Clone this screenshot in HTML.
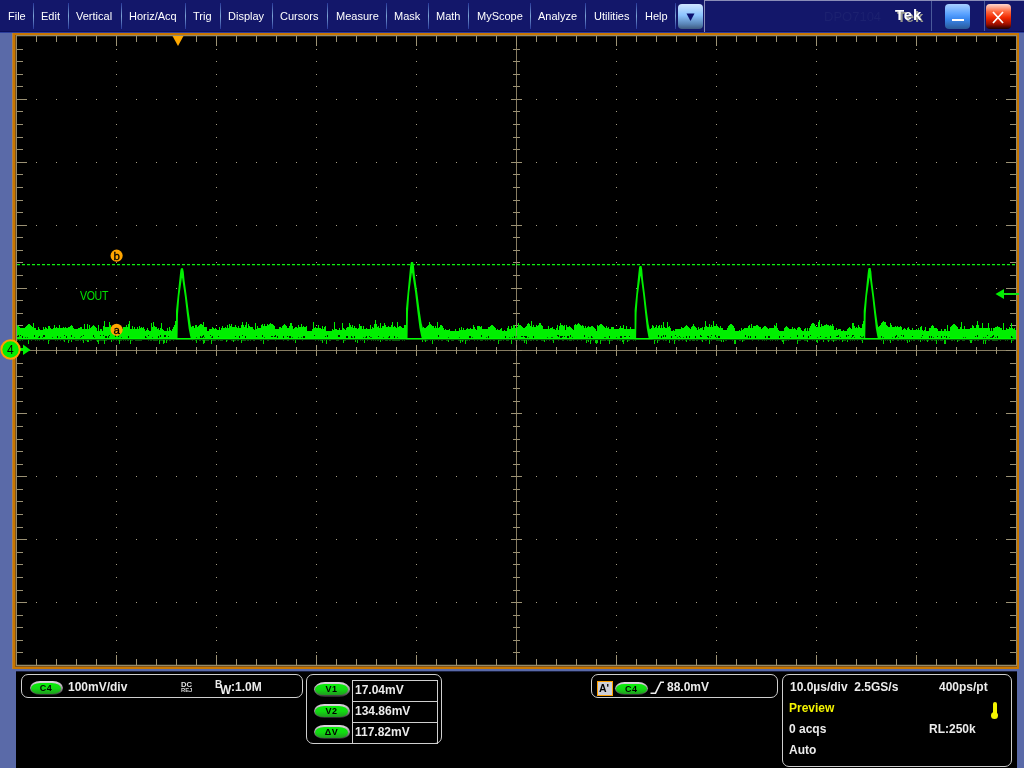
<!DOCTYPE html>
<html><head><meta charset="utf-8"><title>Tek</title>
<style>
html,body{margin:0;padding:0;width:1024px;height:768px;overflow:hidden;background:#5a6aa8;}
body{-webkit-font-smoothing:antialiased;}
.t{will-change:transform;}
.t{position:absolute;white-space:nowrap;font-family:"Liberation Sans",sans-serif;line-height:1;}
.m{color:#fff;font-size:11px;top:11px;}
.sep{position:absolute;top:3px;width:1px;height:26px;background:linear-gradient(#28389a,#7ca4d4 50%,#28389a);}
.w{color:#ececec;font-size:12px;font-weight:bold;}
.panel{position:absolute;border:1.5px solid #cfcfcf;border-radius:7px;box-sizing:border-box;}
.pill{position:absolute;border-radius:11px/7.5px;box-sizing:border-box;background:linear-gradient(#e4dce4,#a8a0a8 45%,#505050 85%,#202020);}
.pill>div{position:absolute;left:1.2px;right:1.2px;top:2px;bottom:1.2px;border-radius:10px/6px;background:linear-gradient(#08f008,#12d812 50%,#209a20);color:#000;font-family:"Liberation Sans",sans-serif;font-size:9px;font-weight:bold;text-align:center;letter-spacing:0.6px;will-change:transform;}
</style></head><body>

<div style="position:absolute;left:0;top:0;width:1024px;height:32px;background:#13176a;"></div>
<div style="position:absolute;left:0;top:31px;width:1024px;height:1px;background:#0b0f5a;"></div>
<div style="position:absolute;left:0;top:32px;width:1024px;height:1px;background:#2c3e9c;"></div>
<div style="position:absolute;left:704px;top:0;width:320px;height:1px;background:#8a8db8;"></div>
<div style="position:absolute;left:704px;top:0;width:1px;height:32px;background:#8a8db8;"></div>
<div class="t m" style="left:7.8px;">File</div>
<div class="t m" style="left:40.7px;">Edit</div>
<div class="t m" style="left:76.2px;">Vertical</div>
<div class="t m" style="left:128.6px;">Horiz/Acq</div>
<div class="t m" style="left:193.1px;">Trig</div>
<div class="t m" style="left:227.6px;">Display</div>
<div class="t m" style="left:279.8px;">Cursors</div>
<div class="t m" style="left:335.5px;">Measure</div>
<div class="t m" style="left:393.8px;">Mask</div>
<div class="t m" style="left:435.8px;">Math</div>
<div class="t m" style="left:476.7px;">MyScope</div>
<div class="t m" style="left:538.3px;">Analyze</div>
<div class="t m" style="left:593.7px;">Utilities</div>
<div class="t m" style="left:644.7px;">Help</div>
<div class="sep" style="left:33px;"></div>
<div class="sep" style="left:68px;"></div>
<div class="sep" style="left:121px;"></div>
<div class="sep" style="left:185px;"></div>
<div class="sep" style="left:220px;"></div>
<div class="sep" style="left:272px;"></div>
<div class="sep" style="left:327px;"></div>
<div class="sep" style="left:386px;"></div>
<div class="sep" style="left:428px;"></div>
<div class="sep" style="left:468px;"></div>
<div class="sep" style="left:530px;"></div>
<div class="sep" style="left:585px;"></div>
<div class="sep" style="left:636px;"></div>
<div class="sep" style="left:675px;"></div>
<div style="position:absolute;left:931px;top:1px;width:1px;height:30px;background:#4a5a9a;"></div>
<div style="position:absolute;left:984px;top:1px;width:1px;height:30px;background:#4a5a9a;"></div>
<div style="position:absolute;left:678px;top:4px;width:25px;height:25px;border-radius:4px;background:linear-gradient(#cfe6ff,#8cc4ff 45%,#5a86b8 80%,#3e5a80);"></div>
<svg style="position:absolute;left:0;top:0" width="1024" height="40"><polygon points="686.5,13.5 694.5,13.5 690.5,21" fill="#0b1070"/></svg>
<div class="t" style="left:824px;top:10px;font-size:13px;color:#1c2170;">DPO7104</div>
<div class="t" style="left:896.5px;top:8.5px;font-size:15px;font-weight:bold;letter-spacing:0.8px;color:#9c9c90;">Tek</div>
<div class="t" style="left:894.5px;top:6.5px;font-size:15px;font-weight:bold;letter-spacing:0.8px;color:#fff;">Tek</div>
<div style="position:absolute;left:945px;top:4px;width:25px;height:25px;border-radius:4px;background:linear-gradient(#a8d0ff,#5aa2ff 40%,#3a88f0 60%,#2a5a98);"></div>
<div style="position:absolute;left:952px;top:19px;width:12px;height:2px;background:#fff;"></div>
<div style="position:absolute;left:986px;top:4px;width:25px;height:25px;border-radius:4px;background:linear-gradient(#ffd8d0,#ff6a40 30%,#f02800 55%,#a01000 80%,#200000);"></div>
<svg style="position:absolute;left:0;top:0" width="1024" height="40"><path d="M993 12 L1003 23 M1003 12 L993 23" stroke="#fff" stroke-width="1.7"/></svg>
<svg style="position:absolute;left:0;top:0" width="1024" height="768" shape-rendering="crispEdges"><rect x="12" y="33" width="1007" height="636" fill="#c87600"/><rect x="12" y="33" width="1" height="636" fill="#b08048"/><rect x="15" y="35" width="1002" height="632" fill="#80541a"/><rect x="16" y="35" width="1001" height="631" fill="#958a6a"/><rect x="17" y="36" width="999" height="629" fill="#262418"/><rect x="17" y="37" width="999" height="627" fill="#000"/><path d="M116 49 h1 v1 h-1zM116 61 h1 v1 h-1zM116 74 h1 v1 h-1zM116 86 h1 v1 h-1zM116 99 h1 v1 h-1zM116 111 h1 v1 h-1zM116 124 h1 v1 h-1zM116 137 h1 v1 h-1zM116 149 h1 v1 h-1zM116 162 h1 v1 h-1zM116 174 h1 v1 h-1zM116 187 h1 v1 h-1zM116 200 h1 v1 h-1zM116 212 h1 v1 h-1zM116 225 h1 v1 h-1zM116 237 h1 v1 h-1zM116 250 h1 v1 h-1zM116 262 h1 v1 h-1zM116 275 h1 v1 h-1zM116 288 h1 v1 h-1zM116 300 h1 v1 h-1zM116 313 h1 v1 h-1zM116 325 h1 v1 h-1zM116 338 h1 v1 h-1zM116 350 h1 v1 h-1zM116 363 h1 v1 h-1zM116 376 h1 v1 h-1zM116 388 h1 v1 h-1zM116 401 h1 v1 h-1zM116 413 h1 v1 h-1zM116 426 h1 v1 h-1zM116 439 h1 v1 h-1zM116 451 h1 v1 h-1zM116 464 h1 v1 h-1zM116 476 h1 v1 h-1zM116 489 h1 v1 h-1zM116 501 h1 v1 h-1zM116 514 h1 v1 h-1zM116 527 h1 v1 h-1zM116 539 h1 v1 h-1zM116 552 h1 v1 h-1zM116 564 h1 v1 h-1zM116 577 h1 v1 h-1zM116 590 h1 v1 h-1zM116 602 h1 v1 h-1zM116 615 h1 v1 h-1zM116 627 h1 v1 h-1zM116 640 h1 v1 h-1zM116 652 h1 v1 h-1zM216 49 h1 v1 h-1zM216 61 h1 v1 h-1zM216 74 h1 v1 h-1zM216 86 h1 v1 h-1zM216 99 h1 v1 h-1zM216 111 h1 v1 h-1zM216 124 h1 v1 h-1zM216 137 h1 v1 h-1zM216 149 h1 v1 h-1zM216 162 h1 v1 h-1zM216 174 h1 v1 h-1zM216 187 h1 v1 h-1zM216 200 h1 v1 h-1zM216 212 h1 v1 h-1zM216 225 h1 v1 h-1zM216 237 h1 v1 h-1zM216 250 h1 v1 h-1zM216 262 h1 v1 h-1zM216 275 h1 v1 h-1zM216 288 h1 v1 h-1zM216 300 h1 v1 h-1zM216 313 h1 v1 h-1zM216 325 h1 v1 h-1zM216 338 h1 v1 h-1zM216 350 h1 v1 h-1zM216 363 h1 v1 h-1zM216 376 h1 v1 h-1zM216 388 h1 v1 h-1zM216 401 h1 v1 h-1zM216 413 h1 v1 h-1zM216 426 h1 v1 h-1zM216 439 h1 v1 h-1zM216 451 h1 v1 h-1zM216 464 h1 v1 h-1zM216 476 h1 v1 h-1zM216 489 h1 v1 h-1zM216 501 h1 v1 h-1zM216 514 h1 v1 h-1zM216 527 h1 v1 h-1zM216 539 h1 v1 h-1zM216 552 h1 v1 h-1zM216 564 h1 v1 h-1zM216 577 h1 v1 h-1zM216 590 h1 v1 h-1zM216 602 h1 v1 h-1zM216 615 h1 v1 h-1zM216 627 h1 v1 h-1zM216 640 h1 v1 h-1zM216 652 h1 v1 h-1zM316 49 h1 v1 h-1zM316 61 h1 v1 h-1zM316 74 h1 v1 h-1zM316 86 h1 v1 h-1zM316 99 h1 v1 h-1zM316 111 h1 v1 h-1zM316 124 h1 v1 h-1zM316 137 h1 v1 h-1zM316 149 h1 v1 h-1zM316 162 h1 v1 h-1zM316 174 h1 v1 h-1zM316 187 h1 v1 h-1zM316 200 h1 v1 h-1zM316 212 h1 v1 h-1zM316 225 h1 v1 h-1zM316 237 h1 v1 h-1zM316 250 h1 v1 h-1zM316 262 h1 v1 h-1zM316 275 h1 v1 h-1zM316 288 h1 v1 h-1zM316 300 h1 v1 h-1zM316 313 h1 v1 h-1zM316 325 h1 v1 h-1zM316 338 h1 v1 h-1zM316 350 h1 v1 h-1zM316 363 h1 v1 h-1zM316 376 h1 v1 h-1zM316 388 h1 v1 h-1zM316 401 h1 v1 h-1zM316 413 h1 v1 h-1zM316 426 h1 v1 h-1zM316 439 h1 v1 h-1zM316 451 h1 v1 h-1zM316 464 h1 v1 h-1zM316 476 h1 v1 h-1zM316 489 h1 v1 h-1zM316 501 h1 v1 h-1zM316 514 h1 v1 h-1zM316 527 h1 v1 h-1zM316 539 h1 v1 h-1zM316 552 h1 v1 h-1zM316 564 h1 v1 h-1zM316 577 h1 v1 h-1zM316 590 h1 v1 h-1zM316 602 h1 v1 h-1zM316 615 h1 v1 h-1zM316 627 h1 v1 h-1zM316 640 h1 v1 h-1zM316 652 h1 v1 h-1zM416 49 h1 v1 h-1zM416 61 h1 v1 h-1zM416 74 h1 v1 h-1zM416 86 h1 v1 h-1zM416 99 h1 v1 h-1zM416 111 h1 v1 h-1zM416 124 h1 v1 h-1zM416 137 h1 v1 h-1zM416 149 h1 v1 h-1zM416 162 h1 v1 h-1zM416 174 h1 v1 h-1zM416 187 h1 v1 h-1zM416 200 h1 v1 h-1zM416 212 h1 v1 h-1zM416 225 h1 v1 h-1zM416 237 h1 v1 h-1zM416 250 h1 v1 h-1zM416 262 h1 v1 h-1zM416 275 h1 v1 h-1zM416 288 h1 v1 h-1zM416 300 h1 v1 h-1zM416 313 h1 v1 h-1zM416 325 h1 v1 h-1zM416 338 h1 v1 h-1zM416 350 h1 v1 h-1zM416 363 h1 v1 h-1zM416 376 h1 v1 h-1zM416 388 h1 v1 h-1zM416 401 h1 v1 h-1zM416 413 h1 v1 h-1zM416 426 h1 v1 h-1zM416 439 h1 v1 h-1zM416 451 h1 v1 h-1zM416 464 h1 v1 h-1zM416 476 h1 v1 h-1zM416 489 h1 v1 h-1zM416 501 h1 v1 h-1zM416 514 h1 v1 h-1zM416 527 h1 v1 h-1zM416 539 h1 v1 h-1zM416 552 h1 v1 h-1zM416 564 h1 v1 h-1zM416 577 h1 v1 h-1zM416 590 h1 v1 h-1zM416 602 h1 v1 h-1zM416 615 h1 v1 h-1zM416 627 h1 v1 h-1zM416 640 h1 v1 h-1zM416 652 h1 v1 h-1zM616 49 h1 v1 h-1zM616 61 h1 v1 h-1zM616 74 h1 v1 h-1zM616 86 h1 v1 h-1zM616 99 h1 v1 h-1zM616 111 h1 v1 h-1zM616 124 h1 v1 h-1zM616 137 h1 v1 h-1zM616 149 h1 v1 h-1zM616 162 h1 v1 h-1zM616 174 h1 v1 h-1zM616 187 h1 v1 h-1zM616 200 h1 v1 h-1zM616 212 h1 v1 h-1zM616 225 h1 v1 h-1zM616 237 h1 v1 h-1zM616 250 h1 v1 h-1zM616 262 h1 v1 h-1zM616 275 h1 v1 h-1zM616 288 h1 v1 h-1zM616 300 h1 v1 h-1zM616 313 h1 v1 h-1zM616 325 h1 v1 h-1zM616 338 h1 v1 h-1zM616 350 h1 v1 h-1zM616 363 h1 v1 h-1zM616 376 h1 v1 h-1zM616 388 h1 v1 h-1zM616 401 h1 v1 h-1zM616 413 h1 v1 h-1zM616 426 h1 v1 h-1zM616 439 h1 v1 h-1zM616 451 h1 v1 h-1zM616 464 h1 v1 h-1zM616 476 h1 v1 h-1zM616 489 h1 v1 h-1zM616 501 h1 v1 h-1zM616 514 h1 v1 h-1zM616 527 h1 v1 h-1zM616 539 h1 v1 h-1zM616 552 h1 v1 h-1zM616 564 h1 v1 h-1zM616 577 h1 v1 h-1zM616 590 h1 v1 h-1zM616 602 h1 v1 h-1zM616 615 h1 v1 h-1zM616 627 h1 v1 h-1zM616 640 h1 v1 h-1zM616 652 h1 v1 h-1zM716 49 h1 v1 h-1zM716 61 h1 v1 h-1zM716 74 h1 v1 h-1zM716 86 h1 v1 h-1zM716 99 h1 v1 h-1zM716 111 h1 v1 h-1zM716 124 h1 v1 h-1zM716 137 h1 v1 h-1zM716 149 h1 v1 h-1zM716 162 h1 v1 h-1zM716 174 h1 v1 h-1zM716 187 h1 v1 h-1zM716 200 h1 v1 h-1zM716 212 h1 v1 h-1zM716 225 h1 v1 h-1zM716 237 h1 v1 h-1zM716 250 h1 v1 h-1zM716 262 h1 v1 h-1zM716 275 h1 v1 h-1zM716 288 h1 v1 h-1zM716 300 h1 v1 h-1zM716 313 h1 v1 h-1zM716 325 h1 v1 h-1zM716 338 h1 v1 h-1zM716 350 h1 v1 h-1zM716 363 h1 v1 h-1zM716 376 h1 v1 h-1zM716 388 h1 v1 h-1zM716 401 h1 v1 h-1zM716 413 h1 v1 h-1zM716 426 h1 v1 h-1zM716 439 h1 v1 h-1zM716 451 h1 v1 h-1zM716 464 h1 v1 h-1zM716 476 h1 v1 h-1zM716 489 h1 v1 h-1zM716 501 h1 v1 h-1zM716 514 h1 v1 h-1zM716 527 h1 v1 h-1zM716 539 h1 v1 h-1zM716 552 h1 v1 h-1zM716 564 h1 v1 h-1zM716 577 h1 v1 h-1zM716 590 h1 v1 h-1zM716 602 h1 v1 h-1zM716 615 h1 v1 h-1zM716 627 h1 v1 h-1zM716 640 h1 v1 h-1zM716 652 h1 v1 h-1zM816 49 h1 v1 h-1zM816 61 h1 v1 h-1zM816 74 h1 v1 h-1zM816 86 h1 v1 h-1zM816 99 h1 v1 h-1zM816 111 h1 v1 h-1zM816 124 h1 v1 h-1zM816 137 h1 v1 h-1zM816 149 h1 v1 h-1zM816 162 h1 v1 h-1zM816 174 h1 v1 h-1zM816 187 h1 v1 h-1zM816 200 h1 v1 h-1zM816 212 h1 v1 h-1zM816 225 h1 v1 h-1zM816 237 h1 v1 h-1zM816 250 h1 v1 h-1zM816 262 h1 v1 h-1zM816 275 h1 v1 h-1zM816 288 h1 v1 h-1zM816 300 h1 v1 h-1zM816 313 h1 v1 h-1zM816 325 h1 v1 h-1zM816 338 h1 v1 h-1zM816 350 h1 v1 h-1zM816 363 h1 v1 h-1zM816 376 h1 v1 h-1zM816 388 h1 v1 h-1zM816 401 h1 v1 h-1zM816 413 h1 v1 h-1zM816 426 h1 v1 h-1zM816 439 h1 v1 h-1zM816 451 h1 v1 h-1zM816 464 h1 v1 h-1zM816 476 h1 v1 h-1zM816 489 h1 v1 h-1zM816 501 h1 v1 h-1zM816 514 h1 v1 h-1zM816 527 h1 v1 h-1zM816 539 h1 v1 h-1zM816 552 h1 v1 h-1zM816 564 h1 v1 h-1zM816 577 h1 v1 h-1zM816 590 h1 v1 h-1zM816 602 h1 v1 h-1zM816 615 h1 v1 h-1zM816 627 h1 v1 h-1zM816 640 h1 v1 h-1zM816 652 h1 v1 h-1zM916 49 h1 v1 h-1zM916 61 h1 v1 h-1zM916 74 h1 v1 h-1zM916 86 h1 v1 h-1zM916 99 h1 v1 h-1zM916 111 h1 v1 h-1zM916 124 h1 v1 h-1zM916 137 h1 v1 h-1zM916 149 h1 v1 h-1zM916 162 h1 v1 h-1zM916 174 h1 v1 h-1zM916 187 h1 v1 h-1zM916 200 h1 v1 h-1zM916 212 h1 v1 h-1zM916 225 h1 v1 h-1zM916 237 h1 v1 h-1zM916 250 h1 v1 h-1zM916 262 h1 v1 h-1zM916 275 h1 v1 h-1zM916 288 h1 v1 h-1zM916 300 h1 v1 h-1zM916 313 h1 v1 h-1zM916 325 h1 v1 h-1zM916 338 h1 v1 h-1zM916 350 h1 v1 h-1zM916 363 h1 v1 h-1zM916 376 h1 v1 h-1zM916 388 h1 v1 h-1zM916 401 h1 v1 h-1zM916 413 h1 v1 h-1zM916 426 h1 v1 h-1zM916 439 h1 v1 h-1zM916 451 h1 v1 h-1zM916 464 h1 v1 h-1zM916 476 h1 v1 h-1zM916 489 h1 v1 h-1zM916 501 h1 v1 h-1zM916 514 h1 v1 h-1zM916 527 h1 v1 h-1zM916 539 h1 v1 h-1zM916 552 h1 v1 h-1zM916 564 h1 v1 h-1zM916 577 h1 v1 h-1zM916 590 h1 v1 h-1zM916 602 h1 v1 h-1zM916 615 h1 v1 h-1zM916 627 h1 v1 h-1zM916 640 h1 v1 h-1zM916 652 h1 v1 h-1zM36 99 h1 v1 h-1zM56 99 h1 v1 h-1zM76 99 h1 v1 h-1zM96 99 h1 v1 h-1zM116 99 h1 v1 h-1zM136 99 h1 v1 h-1zM156 99 h1 v1 h-1zM176 99 h1 v1 h-1zM196 99 h1 v1 h-1zM216 99 h1 v1 h-1zM236 99 h1 v1 h-1zM256 99 h1 v1 h-1zM276 99 h1 v1 h-1zM296 99 h1 v1 h-1zM316 99 h1 v1 h-1zM336 99 h1 v1 h-1zM356 99 h1 v1 h-1zM376 99 h1 v1 h-1zM396 99 h1 v1 h-1zM416 99 h1 v1 h-1zM436 99 h1 v1 h-1zM456 99 h1 v1 h-1zM476 99 h1 v1 h-1zM496 99 h1 v1 h-1zM516 99 h1 v1 h-1zM536 99 h1 v1 h-1zM556 99 h1 v1 h-1zM576 99 h1 v1 h-1zM596 99 h1 v1 h-1zM616 99 h1 v1 h-1zM636 99 h1 v1 h-1zM656 99 h1 v1 h-1zM676 99 h1 v1 h-1zM696 99 h1 v1 h-1zM716 99 h1 v1 h-1zM736 99 h1 v1 h-1zM756 99 h1 v1 h-1zM776 99 h1 v1 h-1zM796 99 h1 v1 h-1zM816 99 h1 v1 h-1zM836 99 h1 v1 h-1zM856 99 h1 v1 h-1zM876 99 h1 v1 h-1zM896 99 h1 v1 h-1zM916 99 h1 v1 h-1zM936 99 h1 v1 h-1zM956 99 h1 v1 h-1zM976 99 h1 v1 h-1zM996 99 h1 v1 h-1zM36 162 h1 v1 h-1zM56 162 h1 v1 h-1zM76 162 h1 v1 h-1zM96 162 h1 v1 h-1zM116 162 h1 v1 h-1zM136 162 h1 v1 h-1zM156 162 h1 v1 h-1zM176 162 h1 v1 h-1zM196 162 h1 v1 h-1zM216 162 h1 v1 h-1zM236 162 h1 v1 h-1zM256 162 h1 v1 h-1zM276 162 h1 v1 h-1zM296 162 h1 v1 h-1zM316 162 h1 v1 h-1zM336 162 h1 v1 h-1zM356 162 h1 v1 h-1zM376 162 h1 v1 h-1zM396 162 h1 v1 h-1zM416 162 h1 v1 h-1zM436 162 h1 v1 h-1zM456 162 h1 v1 h-1zM476 162 h1 v1 h-1zM496 162 h1 v1 h-1zM516 162 h1 v1 h-1zM536 162 h1 v1 h-1zM556 162 h1 v1 h-1zM576 162 h1 v1 h-1zM596 162 h1 v1 h-1zM616 162 h1 v1 h-1zM636 162 h1 v1 h-1zM656 162 h1 v1 h-1zM676 162 h1 v1 h-1zM696 162 h1 v1 h-1zM716 162 h1 v1 h-1zM736 162 h1 v1 h-1zM756 162 h1 v1 h-1zM776 162 h1 v1 h-1zM796 162 h1 v1 h-1zM816 162 h1 v1 h-1zM836 162 h1 v1 h-1zM856 162 h1 v1 h-1zM876 162 h1 v1 h-1zM896 162 h1 v1 h-1zM916 162 h1 v1 h-1zM936 162 h1 v1 h-1zM956 162 h1 v1 h-1zM976 162 h1 v1 h-1zM996 162 h1 v1 h-1zM36 225 h1 v1 h-1zM56 225 h1 v1 h-1zM76 225 h1 v1 h-1zM96 225 h1 v1 h-1zM116 225 h1 v1 h-1zM136 225 h1 v1 h-1zM156 225 h1 v1 h-1zM176 225 h1 v1 h-1zM196 225 h1 v1 h-1zM216 225 h1 v1 h-1zM236 225 h1 v1 h-1zM256 225 h1 v1 h-1zM276 225 h1 v1 h-1zM296 225 h1 v1 h-1zM316 225 h1 v1 h-1zM336 225 h1 v1 h-1zM356 225 h1 v1 h-1zM376 225 h1 v1 h-1zM396 225 h1 v1 h-1zM416 225 h1 v1 h-1zM436 225 h1 v1 h-1zM456 225 h1 v1 h-1zM476 225 h1 v1 h-1zM496 225 h1 v1 h-1zM516 225 h1 v1 h-1zM536 225 h1 v1 h-1zM556 225 h1 v1 h-1zM576 225 h1 v1 h-1zM596 225 h1 v1 h-1zM616 225 h1 v1 h-1zM636 225 h1 v1 h-1zM656 225 h1 v1 h-1zM676 225 h1 v1 h-1zM696 225 h1 v1 h-1zM716 225 h1 v1 h-1zM736 225 h1 v1 h-1zM756 225 h1 v1 h-1zM776 225 h1 v1 h-1zM796 225 h1 v1 h-1zM816 225 h1 v1 h-1zM836 225 h1 v1 h-1zM856 225 h1 v1 h-1zM876 225 h1 v1 h-1zM896 225 h1 v1 h-1zM916 225 h1 v1 h-1zM936 225 h1 v1 h-1zM956 225 h1 v1 h-1zM976 225 h1 v1 h-1zM996 225 h1 v1 h-1zM36 288 h1 v1 h-1zM56 288 h1 v1 h-1zM76 288 h1 v1 h-1zM96 288 h1 v1 h-1zM116 288 h1 v1 h-1zM136 288 h1 v1 h-1zM156 288 h1 v1 h-1zM176 288 h1 v1 h-1zM196 288 h1 v1 h-1zM216 288 h1 v1 h-1zM236 288 h1 v1 h-1zM256 288 h1 v1 h-1zM276 288 h1 v1 h-1zM296 288 h1 v1 h-1zM316 288 h1 v1 h-1zM336 288 h1 v1 h-1zM356 288 h1 v1 h-1zM376 288 h1 v1 h-1zM396 288 h1 v1 h-1zM416 288 h1 v1 h-1zM436 288 h1 v1 h-1zM456 288 h1 v1 h-1zM476 288 h1 v1 h-1zM496 288 h1 v1 h-1zM516 288 h1 v1 h-1zM536 288 h1 v1 h-1zM556 288 h1 v1 h-1zM576 288 h1 v1 h-1zM596 288 h1 v1 h-1zM616 288 h1 v1 h-1zM636 288 h1 v1 h-1zM656 288 h1 v1 h-1zM676 288 h1 v1 h-1zM696 288 h1 v1 h-1zM716 288 h1 v1 h-1zM736 288 h1 v1 h-1zM756 288 h1 v1 h-1zM776 288 h1 v1 h-1zM796 288 h1 v1 h-1zM816 288 h1 v1 h-1zM836 288 h1 v1 h-1zM856 288 h1 v1 h-1zM876 288 h1 v1 h-1zM896 288 h1 v1 h-1zM916 288 h1 v1 h-1zM936 288 h1 v1 h-1zM956 288 h1 v1 h-1zM976 288 h1 v1 h-1zM996 288 h1 v1 h-1zM36 413 h1 v1 h-1zM56 413 h1 v1 h-1zM76 413 h1 v1 h-1zM96 413 h1 v1 h-1zM116 413 h1 v1 h-1zM136 413 h1 v1 h-1zM156 413 h1 v1 h-1zM176 413 h1 v1 h-1zM196 413 h1 v1 h-1zM216 413 h1 v1 h-1zM236 413 h1 v1 h-1zM256 413 h1 v1 h-1zM276 413 h1 v1 h-1zM296 413 h1 v1 h-1zM316 413 h1 v1 h-1zM336 413 h1 v1 h-1zM356 413 h1 v1 h-1zM376 413 h1 v1 h-1zM396 413 h1 v1 h-1zM416 413 h1 v1 h-1zM436 413 h1 v1 h-1zM456 413 h1 v1 h-1zM476 413 h1 v1 h-1zM496 413 h1 v1 h-1zM516 413 h1 v1 h-1zM536 413 h1 v1 h-1zM556 413 h1 v1 h-1zM576 413 h1 v1 h-1zM596 413 h1 v1 h-1zM616 413 h1 v1 h-1zM636 413 h1 v1 h-1zM656 413 h1 v1 h-1zM676 413 h1 v1 h-1zM696 413 h1 v1 h-1zM716 413 h1 v1 h-1zM736 413 h1 v1 h-1zM756 413 h1 v1 h-1zM776 413 h1 v1 h-1zM796 413 h1 v1 h-1zM816 413 h1 v1 h-1zM836 413 h1 v1 h-1zM856 413 h1 v1 h-1zM876 413 h1 v1 h-1zM896 413 h1 v1 h-1zM916 413 h1 v1 h-1zM936 413 h1 v1 h-1zM956 413 h1 v1 h-1zM976 413 h1 v1 h-1zM996 413 h1 v1 h-1zM36 476 h1 v1 h-1zM56 476 h1 v1 h-1zM76 476 h1 v1 h-1zM96 476 h1 v1 h-1zM116 476 h1 v1 h-1zM136 476 h1 v1 h-1zM156 476 h1 v1 h-1zM176 476 h1 v1 h-1zM196 476 h1 v1 h-1zM216 476 h1 v1 h-1zM236 476 h1 v1 h-1zM256 476 h1 v1 h-1zM276 476 h1 v1 h-1zM296 476 h1 v1 h-1zM316 476 h1 v1 h-1zM336 476 h1 v1 h-1zM356 476 h1 v1 h-1zM376 476 h1 v1 h-1zM396 476 h1 v1 h-1zM416 476 h1 v1 h-1zM436 476 h1 v1 h-1zM456 476 h1 v1 h-1zM476 476 h1 v1 h-1zM496 476 h1 v1 h-1zM516 476 h1 v1 h-1zM536 476 h1 v1 h-1zM556 476 h1 v1 h-1zM576 476 h1 v1 h-1zM596 476 h1 v1 h-1zM616 476 h1 v1 h-1zM636 476 h1 v1 h-1zM656 476 h1 v1 h-1zM676 476 h1 v1 h-1zM696 476 h1 v1 h-1zM716 476 h1 v1 h-1zM736 476 h1 v1 h-1zM756 476 h1 v1 h-1zM776 476 h1 v1 h-1zM796 476 h1 v1 h-1zM816 476 h1 v1 h-1zM836 476 h1 v1 h-1zM856 476 h1 v1 h-1zM876 476 h1 v1 h-1zM896 476 h1 v1 h-1zM916 476 h1 v1 h-1zM936 476 h1 v1 h-1zM956 476 h1 v1 h-1zM976 476 h1 v1 h-1zM996 476 h1 v1 h-1zM36 539 h1 v1 h-1zM56 539 h1 v1 h-1zM76 539 h1 v1 h-1zM96 539 h1 v1 h-1zM116 539 h1 v1 h-1zM136 539 h1 v1 h-1zM156 539 h1 v1 h-1zM176 539 h1 v1 h-1zM196 539 h1 v1 h-1zM216 539 h1 v1 h-1zM236 539 h1 v1 h-1zM256 539 h1 v1 h-1zM276 539 h1 v1 h-1zM296 539 h1 v1 h-1zM316 539 h1 v1 h-1zM336 539 h1 v1 h-1zM356 539 h1 v1 h-1zM376 539 h1 v1 h-1zM396 539 h1 v1 h-1zM416 539 h1 v1 h-1zM436 539 h1 v1 h-1zM456 539 h1 v1 h-1zM476 539 h1 v1 h-1zM496 539 h1 v1 h-1zM516 539 h1 v1 h-1zM536 539 h1 v1 h-1zM556 539 h1 v1 h-1zM576 539 h1 v1 h-1zM596 539 h1 v1 h-1zM616 539 h1 v1 h-1zM636 539 h1 v1 h-1zM656 539 h1 v1 h-1zM676 539 h1 v1 h-1zM696 539 h1 v1 h-1zM716 539 h1 v1 h-1zM736 539 h1 v1 h-1zM756 539 h1 v1 h-1zM776 539 h1 v1 h-1zM796 539 h1 v1 h-1zM816 539 h1 v1 h-1zM836 539 h1 v1 h-1zM856 539 h1 v1 h-1zM876 539 h1 v1 h-1zM896 539 h1 v1 h-1zM916 539 h1 v1 h-1zM936 539 h1 v1 h-1zM956 539 h1 v1 h-1zM976 539 h1 v1 h-1zM996 539 h1 v1 h-1zM36 602 h1 v1 h-1zM56 602 h1 v1 h-1zM76 602 h1 v1 h-1zM96 602 h1 v1 h-1zM116 602 h1 v1 h-1zM136 602 h1 v1 h-1zM156 602 h1 v1 h-1zM176 602 h1 v1 h-1zM196 602 h1 v1 h-1zM216 602 h1 v1 h-1zM236 602 h1 v1 h-1zM256 602 h1 v1 h-1zM276 602 h1 v1 h-1zM296 602 h1 v1 h-1zM316 602 h1 v1 h-1zM336 602 h1 v1 h-1zM356 602 h1 v1 h-1zM376 602 h1 v1 h-1zM396 602 h1 v1 h-1zM416 602 h1 v1 h-1zM436 602 h1 v1 h-1zM456 602 h1 v1 h-1zM476 602 h1 v1 h-1zM496 602 h1 v1 h-1zM516 602 h1 v1 h-1zM536 602 h1 v1 h-1zM556 602 h1 v1 h-1zM576 602 h1 v1 h-1zM596 602 h1 v1 h-1zM616 602 h1 v1 h-1zM636 602 h1 v1 h-1zM656 602 h1 v1 h-1zM676 602 h1 v1 h-1zM696 602 h1 v1 h-1zM716 602 h1 v1 h-1zM736 602 h1 v1 h-1zM756 602 h1 v1 h-1zM776 602 h1 v1 h-1zM796 602 h1 v1 h-1zM816 602 h1 v1 h-1zM836 602 h1 v1 h-1zM856 602 h1 v1 h-1zM876 602 h1 v1 h-1zM896 602 h1 v1 h-1zM916 602 h1 v1 h-1zM936 602 h1 v1 h-1zM956 602 h1 v1 h-1zM976 602 h1 v1 h-1zM996 602 h1 v1 h-1z" fill="#a49c82"/><path d="M516.5 37 V665 M17 350.5 H1016" stroke="#877d62" stroke-width="1" fill="none"/><path d="M36.5 36 v6 M36.5 665 v-6 M56.5 36 v6 M56.5 665 v-6 M76.5 36 v6 M76.5 665 v-6 M96.5 36 v6 M96.5 665 v-6 M116.5 36 v10 M116.5 665 v-10 M136.5 36 v6 M136.5 665 v-6 M156.5 36 v6 M156.5 665 v-6 M176.5 36 v6 M176.5 665 v-6 M196.5 36 v6 M196.5 665 v-6 M216.5 36 v10 M216.5 665 v-10 M236.5 36 v6 M236.5 665 v-6 M256.5 36 v6 M256.5 665 v-6 M276.5 36 v6 M276.5 665 v-6 M296.5 36 v6 M296.5 665 v-6 M316.5 36 v10 M316.5 665 v-10 M336.5 36 v6 M336.5 665 v-6 M356.5 36 v6 M356.5 665 v-6 M376.5 36 v6 M376.5 665 v-6 M396.5 36 v6 M396.5 665 v-6 M416.5 36 v10 M416.5 665 v-10 M436.5 36 v6 M436.5 665 v-6 M456.5 36 v6 M456.5 665 v-6 M476.5 36 v6 M476.5 665 v-6 M496.5 36 v6 M496.5 665 v-6 M516.5 36 v10 M516.5 665 v-10 M536.5 36 v6 M536.5 665 v-6 M556.5 36 v6 M556.5 665 v-6 M576.5 36 v6 M576.5 665 v-6 M596.5 36 v6 M596.5 665 v-6 M616.5 36 v10 M616.5 665 v-10 M636.5 36 v6 M636.5 665 v-6 M656.5 36 v6 M656.5 665 v-6 M676.5 36 v6 M676.5 665 v-6 M696.5 36 v6 M696.5 665 v-6 M716.5 36 v10 M716.5 665 v-10 M736.5 36 v6 M736.5 665 v-6 M756.5 36 v6 M756.5 665 v-6 M776.5 36 v6 M776.5 665 v-6 M796.5 36 v6 M796.5 665 v-6 M816.5 36 v10 M816.5 665 v-10 M836.5 36 v6 M836.5 665 v-6 M856.5 36 v6 M856.5 665 v-6 M876.5 36 v6 M876.5 665 v-6 M896.5 36 v6 M896.5 665 v-6 M916.5 36 v10 M916.5 665 v-10 M936.5 36 v6 M936.5 665 v-6 M956.5 36 v6 M956.5 665 v-6 M976.5 36 v6 M976.5 665 v-6 M996.5 36 v6 M996.5 665 v-6 M17 49.5 h6 M1016 49.5 h-6 M513 49.5 h7 M17 61.5 h6 M1016 61.5 h-6 M513 61.5 h7 M17 74.5 h6 M1016 74.5 h-6 M513 74.5 h7 M17 86.5 h6 M1016 86.5 h-6 M513 86.5 h7 M17 99.5 h10 M1016 99.5 h-10 M511 99.5 h11 M17 111.5 h6 M1016 111.5 h-6 M513 111.5 h7 M17 124.5 h6 M1016 124.5 h-6 M513 124.5 h7 M17 137.5 h6 M1016 137.5 h-6 M513 137.5 h7 M17 149.5 h6 M1016 149.5 h-6 M513 149.5 h7 M17 162.5 h10 M1016 162.5 h-10 M511 162.5 h11 M17 174.5 h6 M1016 174.5 h-6 M513 174.5 h7 M17 187.5 h6 M1016 187.5 h-6 M513 187.5 h7 M17 200.5 h6 M1016 200.5 h-6 M513 200.5 h7 M17 212.5 h6 M1016 212.5 h-6 M513 212.5 h7 M17 225.5 h10 M1016 225.5 h-10 M511 225.5 h11 M17 237.5 h6 M1016 237.5 h-6 M513 237.5 h7 M17 250.5 h6 M1016 250.5 h-6 M513 250.5 h7 M17 262.5 h6 M1016 262.5 h-6 M513 262.5 h7 M17 275.5 h6 M1016 275.5 h-6 M513 275.5 h7 M17 288.5 h10 M1016 288.5 h-10 M511 288.5 h11 M17 300.5 h6 M1016 300.5 h-6 M513 300.5 h7 M17 313.5 h6 M1016 313.5 h-6 M513 313.5 h7 M17 325.5 h6 M1016 325.5 h-6 M513 325.5 h7 M17 338.5 h6 M1016 338.5 h-6 M513 338.5 h7 M17 350.5 h10 M1016 350.5 h-10 M511 350.5 h11 M17 363.5 h6 M1016 363.5 h-6 M513 363.5 h7 M17 376.5 h6 M1016 376.5 h-6 M513 376.5 h7 M17 388.5 h6 M1016 388.5 h-6 M513 388.5 h7 M17 401.5 h6 M1016 401.5 h-6 M513 401.5 h7 M17 413.5 h10 M1016 413.5 h-10 M511 413.5 h11 M17 426.5 h6 M1016 426.5 h-6 M513 426.5 h7 M17 439.5 h6 M1016 439.5 h-6 M513 439.5 h7 M17 451.5 h6 M1016 451.5 h-6 M513 451.5 h7 M17 464.5 h6 M1016 464.5 h-6 M513 464.5 h7 M17 476.5 h10 M1016 476.5 h-10 M511 476.5 h11 M17 489.5 h6 M1016 489.5 h-6 M513 489.5 h7 M17 501.5 h6 M1016 501.5 h-6 M513 501.5 h7 M17 514.5 h6 M1016 514.5 h-6 M513 514.5 h7 M17 527.5 h6 M1016 527.5 h-6 M513 527.5 h7 M17 539.5 h10 M1016 539.5 h-10 M511 539.5 h11 M17 552.5 h6 M1016 552.5 h-6 M513 552.5 h7 M17 564.5 h6 M1016 564.5 h-6 M513 564.5 h7 M17 577.5 h6 M1016 577.5 h-6 M513 577.5 h7 M17 590.5 h6 M1016 590.5 h-6 M513 590.5 h7 M17 602.5 h10 M1016 602.5 h-10 M511 602.5 h11 M17 615.5 h6 M1016 615.5 h-6 M513 615.5 h7 M17 627.5 h6 M1016 627.5 h-6 M513 627.5 h7 M17 640.5 h6 M1016 640.5 h-6 M513 640.5 h7 M17 652.5 h6 M1016 652.5 h-6 M513 652.5 h7 M36.5 347 v7 M56.5 347 v7 M76.5 347 v7 M96.5 347 v7 M116.5 345 v11 M136.5 347 v7 M156.5 347 v7 M176.5 347 v7 M196.5 347 v7 M216.5 345 v11 M236.5 347 v7 M256.5 347 v7 M276.5 347 v7 M296.5 347 v7 M316.5 345 v11 M336.5 347 v7 M356.5 347 v7 M376.5 347 v7 M396.5 347 v7 M416.5 345 v11 M436.5 347 v7 M456.5 347 v7 M476.5 347 v7 M496.5 347 v7 M516.5 345 v11 M536.5 347 v7 M556.5 347 v7 M576.5 347 v7 M596.5 347 v7 M616.5 345 v11 M636.5 347 v7 M656.5 347 v7 M676.5 347 v7 M696.5 347 v7 M716.5 345 v11 M736.5 347 v7 M756.5 347 v7 M776.5 347 v7 M796.5 347 v7 M816.5 345 v11 M836.5 347 v7 M856.5 347 v7 M876.5 347 v7 M896.5 347 v7 M916.5 345 v11 M936.5 347 v7 M956.5 347 v7 M976.5 347 v7 M996.5 347 v7 " stroke="#9c9274" stroke-width="1" fill="none"/><line x1="17" y1="264.6" x2="1016" y2="264.6" stroke="#10f010" stroke-width="1.25" stroke-dasharray="3 2" shape-rendering="auto"/><path d="M17.5 325 V339 M18.5 326 V339 M19.5 327 V339 M20.5 328 V339 M21.5 328 V339 M22.5 328 V339 M23.5 328 V339 M24.5 328 V339 M25.5 327 V339 M26.5 326 V339 M27.5 325 V339 M28.5 324 V339 M29.5 324 V339 M30.5 325 V339 M31.5 326 V339 M32.5 327 V339 M33.5 323 V339 M34.5 328 V339 M35.5 328 V339 M36.5 330 V339 M37.5 330 V339 M38.5 327 V339 M39.5 329 V339 M40.5 330 V339 M41.5 330 V339 M42.5 330 V339 M43.5 327 V339 M44.5 329 V339 M45.5 327 V339 M46.5 328 V339 M47.5 329 V339 M48.5 326 V339 M49.5 326 V339 M50.5 328 V339 M51.5 329 V339 M52.5 329 V339 M53.5 328 V339 M54.5 325 V339 M55.5 328 V339 M56.5 327 V339 M57.5 328 V339 M58.5 328 V339 M59.5 325 V339 M60.5 328 V339 M61.5 328 V339 M62.5 328 V339 M63.5 327 V339 M64.5 328 V339 M65.5 327 V339 M66.5 328 V339 M67.5 328 V339 M68.5 327 V339 M69.5 327 V339 M70.5 326 V339 M71.5 325 V339 M72.5 326 V339 M73.5 328 V339 M74.5 329 V339 M75.5 329 V339 M76.5 329 V339 M77.5 329 V339 M78.5 328 V339 M79.5 328 V339 M80.5 327 V339 M81.5 327 V339 M82.5 329 V339 M83.5 329 V339 M84.5 324 V339 M85.5 329 V339 M86.5 329 V339 M87.5 324 V339 M88.5 329 V339 M89.5 325 V339 M90.5 328 V339 M91.5 327 V339 M92.5 326 V339 M93.5 325 V339 M94.5 326 V339 M95.5 327 V339 M96.5 328 V339 M97.5 331 V339 M98.5 325 V339 M99.5 331 V339 M100.5 329 V339 M101.5 329 V339 M102.5 331 V339 M103.5 326 V339 M104.5 321 V339 M105.5 327 V339 M106.5 327 V339 M107.5 327 V339 M108.5 327 V339 M109.5 322 V339 M110.5 325 V339 M111.5 327 V339 M112.5 329 V339 M113.5 327 V339 M114.5 330 V339 M115.5 330 V339 M116.5 329 V339 M117.5 327 V339 M118.5 329 V339 M119.5 329 V339 M120.5 329 V339 M121.5 329 V339 M122.5 329 V339 M123.5 327 V339 M124.5 327 V339 M125.5 327 V339 M126.5 325 V339 M127.5 327 V339 M128.5 324 V339 M129.5 321 V339 M130.5 329 V339 M131.5 329 V339 M132.5 326 V339 M133.5 329 V339 M134.5 327 V339 M135.5 329 V339 M136.5 329 V339 M137.5 327 V339 M138.5 329 V339 M139.5 326 V339 M140.5 328 V339 M141.5 327 V339 M142.5 328 V339 M143.5 327 V339 M144.5 329 V339 M145.5 331 V339 M146.5 330 V339 M147.5 328 V339 M148.5 330 V339 M149.5 331 V339 M150.5 331 V339 M151.5 323 V339 M152.5 327 V339 M153.5 322 V339 M154.5 326 V339 M155.5 327 V339 M156.5 327 V339 M157.5 329 V339 M158.5 328 V339 M159.5 330 V339 M160.5 328 V339 M161.5 323 V339 M162.5 329 V339 M163.5 330 V339 M164.5 331 V339 M165.5 331 V339 M166.5 331 V339 M167.5 328 V339 M168.5 331 V339 M169.5 327 V339 M170.5 330 V339 M171.5 331 V339 M172.5 329 V339 M173.5 327 V339 M174.5 325 V339 M175.5 321 V339 M176.5 325 V339 M191.5 327 V339 M192.5 326 V339 M193.5 326 V339 M194.5 328 V339 M195.5 325 V339 M196.5 325 V339 M197.5 327 V339 M198.5 326 V339 M199.5 325 V339 M200.5 324 V339 M201.5 324 V339 M202.5 325 V339 M203.5 322 V339 M204.5 327 V339 M205.5 327 V339 M206.5 327 V339 M207.5 331 V339 M208.5 331 V339 M209.5 329 V339 M210.5 329 V339 M211.5 329 V339 M212.5 327 V339 M213.5 328 V339 M214.5 329 V339 M215.5 328 V339 M216.5 329 V339 M217.5 330 V339 M218.5 330 V339 M219.5 327 V339 M220.5 330 V339 M221.5 328 V339 M222.5 326 V339 M223.5 328 V339 M224.5 328 V339 M225.5 327 V339 M226.5 328 V339 M227.5 325 V339 M228.5 328 V339 M229.5 324 V339 M230.5 326 V339 M231.5 324 V339 M232.5 327 V339 M233.5 327 V339 M234.5 327 V339 M235.5 325 V339 M236.5 327 V339 M237.5 328 V339 M238.5 326 V339 M239.5 328 V339 M240.5 328 V339 M241.5 325 V339 M242.5 322 V339 M243.5 325 V339 M244.5 327 V339 M245.5 325 V339 M246.5 322 V339 M247.5 328 V339 M248.5 324 V339 M249.5 326 V339 M250.5 327 V339 M251.5 327 V339 M252.5 327 V339 M253.5 329 V339 M254.5 330 V339 M255.5 323 V339 M256.5 329 V339 M257.5 326 V339 M258.5 328 V339 M259.5 328 V339 M260.5 328 V339 M261.5 325 V339 M262.5 324 V339 M263.5 326 V339 M264.5 324 V339 M265.5 326 V339 M266.5 326 V339 M267.5 324 V339 M268.5 325 V339 M269.5 324 V339 M270.5 323 V339 M271.5 324 V339 M272.5 324 V339 M273.5 325 V339 M274.5 326 V339 M275.5 329 V339 M276.5 329 V339 M277.5 329 V339 M278.5 329 V339 M279.5 327 V339 M280.5 327 V339 M281.5 328 V339 M282.5 326 V339 M283.5 325 V339 M284.5 324 V339 M285.5 325 V339 M286.5 326 V339 M287.5 328 V339 M288.5 328 V339 M289.5 326 V339 M290.5 323 V339 M291.5 323 V339 M292.5 326 V339 M293.5 329 V339 M294.5 328 V339 M295.5 327 V339 M296.5 327 V339 M297.5 328 V339 M298.5 325 V339 M299.5 327 V339 M300.5 327 V339 M301.5 324 V339 M302.5 327 V339 M303.5 326 V339 M304.5 327 V339 M305.5 327 V339 M306.5 326 V339 M307.5 331 V339 M308.5 331 V339 M309.5 331 V339 M310.5 331 V339 M311.5 331 V339 M312.5 329 V339 M313.5 322 V339 M314.5 328 V339 M315.5 327 V339 M316.5 328 V339 M317.5 328 V339 M318.5 325 V339 M319.5 328 V339 M320.5 328 V339 M321.5 329 V339 M322.5 326 V339 M323.5 329 V339 M324.5 327 V339 M325.5 326 V339 M326.5 331 V339 M327.5 331 V339 M328.5 331 V339 M329.5 331 V339 M330.5 331 V339 M331.5 331 V339 M332.5 329 V339 M333.5 330 V339 M334.5 322 V339 M335.5 329 V339 M336.5 329 V339 M337.5 330 V339 M338.5 330 V339 M339.5 328 V339 M340.5 330 V339 M341.5 330 V339 M342.5 323 V339 M343.5 328 V339 M344.5 329 V339 M345.5 330 V339 M346.5 328 V339 M347.5 327 V339 M348.5 327 V339 M349.5 323 V339 M350.5 325 V339 M351.5 327 V339 M352.5 325 V339 M353.5 328 V339 M354.5 326 V339 M355.5 328 V339 M356.5 328 V339 M357.5 329 V339 M358.5 328 V339 M359.5 324 V339 M360.5 326 V339 M361.5 326 V339 M362.5 329 V339 M363.5 326 V339 M364.5 329 V339 M365.5 329 V339 M366.5 328 V339 M367.5 329 V339 M368.5 329 V339 M369.5 329 V339 M370.5 325 V339 M371.5 329 V339 M372.5 327 V339 M373.5 328 V339 M374.5 324 V339 M375.5 320 V339 M376.5 324 V339 M377.5 327 V339 M378.5 326 V339 M379.5 328 V339 M380.5 323 V339 M381.5 328 V339 M382.5 326 V339 M383.5 326 V339 M384.5 323 V339 M385.5 325 V339 M386.5 327 V339 M387.5 327 V339 M388.5 326 V339 M389.5 327 V339 M390.5 327 V339 M391.5 325 V339 M392.5 322 V339 M393.5 327 V339 M394.5 326 V339 M395.5 327 V339 M396.5 328 V339 M397.5 322 V339 M398.5 327 V339 M399.5 326 V339 M400.5 326 V339 M401.5 327 V339 M402.5 328 V339 M403.5 328 V339 M404.5 325 V339 M405.5 325 V339 M406.5 328 V339 M422.5 328 V339 M423.5 327 V339 M424.5 328 V339 M425.5 328 V339 M426.5 327 V339 M427.5 326 V339 M428.5 325 V339 M429.5 322 V339 M430.5 324 V339 M431.5 325 V339 M432.5 326 V339 M433.5 326 V339 M434.5 328 V339 M435.5 326 V339 M436.5 328 V339 M437.5 322 V339 M438.5 328 V339 M439.5 327 V339 M440.5 325 V339 M441.5 325 V339 M442.5 326 V339 M443.5 328 V339 M444.5 330 V339 M445.5 329 V339 M446.5 330 V339 M447.5 330 V339 M448.5 330 V339 M449.5 329 V339 M450.5 331 V339 M451.5 331 V339 M452.5 331 V339 M453.5 331 V339 M454.5 331 V339 M455.5 329 V339 M456.5 331 V339 M457.5 331 V339 M458.5 331 V339 M459.5 328 V339 M460.5 330 V339 M461.5 327 V339 M462.5 330 V339 M463.5 328 V339 M464.5 330 V339 M465.5 330 V339 M466.5 329 V339 M467.5 328 V339 M468.5 329 V339 M469.5 329 V339 M470.5 328 V339 M471.5 329 V339 M472.5 329 V339 M473.5 325 V339 M474.5 327 V339 M475.5 329 V339 M476.5 330 V339 M477.5 326 V339 M478.5 326 V339 M479.5 326 V339 M480.5 327 V339 M481.5 326 V339 M482.5 329 V339 M483.5 329 V339 M484.5 329 V339 M485.5 329 V339 M486.5 329 V339 M487.5 329 V339 M488.5 327 V339 M489.5 327 V339 M490.5 326 V339 M491.5 325 V339 M492.5 325 V339 M493.5 326 V339 M494.5 327 V339 M495.5 328 V339 M496.5 330 V339 M497.5 329 V339 M498.5 330 V339 M499.5 330 V339 M500.5 329 V339 M501.5 328 V339 M502.5 331 V339 M503.5 331 V339 M504.5 330 V339 M505.5 331 V339 M506.5 331 V339 M507.5 328 V339 M508.5 326 V339 M509.5 329 V339 M510.5 329 V339 M511.5 326 V339 M512.5 328 V339 M513.5 325 V339 M514.5 325 V339 M515.5 328 V339 M516.5 328 V339 M517.5 327 V339 M518.5 323 V339 M519.5 325 V339 M520.5 325 V339 M521.5 326 V339 M522.5 327 V339 M523.5 328 V339 M524.5 328 V339 M525.5 327 V339 M526.5 326 V339 M527.5 324 V339 M528.5 323 V339 M529.5 324 V339 M530.5 326 V339 M531.5 321 V339 M532.5 327 V339 M533.5 325 V339 M534.5 327 V339 M535.5 327 V339 M536.5 325 V339 M537.5 326 V339 M538.5 325 V339 M539.5 323 V339 M540.5 323 V339 M541.5 325 V339 M542.5 326 V339 M543.5 329 V339 M544.5 329 V339 M545.5 329 V339 M546.5 329 V339 M547.5 329 V339 M548.5 326 V339 M549.5 329 V339 M550.5 328 V339 M551.5 328 V339 M552.5 327 V339 M553.5 329 V339 M554.5 329 V339 M555.5 330 V339 M556.5 328 V339 M557.5 325 V339 M558.5 330 V339 M559.5 326 V339 M560.5 323 V339 M561.5 325 V339 M562.5 325 V339 M563.5 326 V339 M564.5 325 V339 M565.5 330 V339 M566.5 325 V339 M567.5 327 V339 M568.5 327 V339 M569.5 326 V339 M570.5 327 V339 M571.5 328 V339 M572.5 329 V339 M573.5 330 V339 M574.5 325 V339 M575.5 324 V339 M576.5 325 V339 M577.5 324 V339 M578.5 323 V339 M579.5 324 V339 M580.5 325 V339 M581.5 326 V339 M582.5 325 V339 M583.5 326 V339 M584.5 328 V339 M585.5 326 V339 M586.5 328 V339 M587.5 327 V339 M588.5 326 V339 M589.5 327 V339 M590.5 327 V339 M591.5 326 V339 M592.5 326 V339 M593.5 327 V339 M594.5 328 V339 M595.5 329 V339 M596.5 331 V339 M597.5 325 V339 M598.5 326 V339 M599.5 325 V339 M600.5 324 V339 M601.5 324 V339 M602.5 325 V339 M603.5 326 V339 M604.5 327 V339 M605.5 328 V339 M606.5 326 V339 M607.5 328 V339 M608.5 327 V339 M609.5 329 V339 M610.5 329 V339 M611.5 327 V339 M612.5 327 V339 M613.5 327 V339 M614.5 329 V339 M615.5 329 V339 M616.5 329 V339 M617.5 329 V339 M618.5 329 V339 M619.5 328 V339 M620.5 326 V339 M621.5 328 V339 M622.5 328 V339 M623.5 325 V339 M624.5 329 V339 M625.5 329 V339 M626.5 326 V339 M627.5 329 V339 M628.5 329 V339 M629.5 329 V339 M630.5 327 V339 M631.5 329 V339 M632.5 329 V339 M633.5 329 V339 M634.5 329 V339 M635.5 329 V339 M649.5 329 V339 M650.5 329 V339 M651.5 328 V339 M652.5 325 V339 M653.5 326 V339 M654.5 328 V339 M655.5 327 V339 M656.5 325 V339 M657.5 328 V339 M658.5 326 V339 M659.5 325 V339 M660.5 328 V339 M661.5 325 V339 M662.5 328 V339 M663.5 322 V339 M664.5 327 V339 M665.5 328 V339 M666.5 328 V339 M667.5 322 V339 M668.5 327 V339 M669.5 326 V339 M670.5 328 V339 M671.5 331 V339 M672.5 331 V339 M673.5 330 V339 M674.5 331 V339 M675.5 329 V339 M676.5 329 V339 M677.5 329 V339 M678.5 329 V339 M679.5 329 V339 M680.5 329 V339 M681.5 327 V339 M682.5 328 V339 M683.5 328 V339 M684.5 327 V339 M685.5 326 V339 M686.5 325 V339 M687.5 326 V339 M688.5 327 V339 M689.5 328 V339 M690.5 329 V339 M691.5 327 V339 M692.5 326 V339 M693.5 324 V339 M694.5 326 V339 M695.5 327 V339 M696.5 328 V339 M697.5 330 V339 M698.5 327 V339 M699.5 329 V339 M700.5 328 V339 M701.5 328 V339 M702.5 327 V339 M703.5 330 V339 M704.5 327 V339 M705.5 321 V339 M706.5 326 V339 M707.5 327 V339 M708.5 327 V339 M709.5 324 V339 M710.5 327 V339 M711.5 325 V339 M712.5 327 V339 M713.5 321 V339 M714.5 326 V339 M715.5 326 V339 M716.5 324 V339 M717.5 326 V339 M718.5 327 V339 M719.5 328 V339 M720.5 326 V339 M721.5 328 V339 M722.5 328 V339 M723.5 330 V339 M724.5 330 V339 M725.5 330 V339 M726.5 330 V339 M727.5 328 V339 M728.5 326 V339 M729.5 325 V339 M730.5 324 V339 M731.5 324 V339 M732.5 325 V339 M733.5 326 V339 M734.5 328 V339 M735.5 331 V339 M736.5 331 V339 M737.5 331 V339 M738.5 331 V339 M739.5 330 V339 M740.5 331 V339 M741.5 328 V339 M742.5 330 V339 M743.5 329 V339 M744.5 328 V339 M745.5 328 V339 M746.5 328 V339 M747.5 328 V339 M748.5 326 V339 M749.5 325 V339 M750.5 328 V339 M751.5 324 V339 M752.5 328 V339 M753.5 326 V339 M754.5 326 V339 M755.5 326 V339 M756.5 325 V339 M757.5 325 V339 M758.5 326 V339 M759.5 327 V339 M760.5 327 V339 M761.5 329 V339 M762.5 328 V339 M763.5 327 V339 M764.5 326 V339 M765.5 326 V339 M766.5 327 V339 M767.5 328 V339 M768.5 329 V339 M769.5 328 V339 M770.5 328 V339 M771.5 328 V339 M772.5 328 V339 M773.5 328 V339 M774.5 325 V339 M775.5 326 V339 M776.5 323 V339 M777.5 328 V339 M778.5 330 V339 M779.5 331 V339 M780.5 331 V339 M781.5 331 V339 M782.5 331 V339 M783.5 331 V339 M784.5 328 V339 M785.5 327 V339 M786.5 326 V339 M787.5 327 V339 M788.5 328 V339 M789.5 329 V339 M790.5 329 V339 M791.5 329 V339 M792.5 327 V339 M793.5 329 V339 M794.5 328 V339 M795.5 329 V339 M796.5 330 V339 M797.5 328 V339 M798.5 327 V339 M799.5 327 V339 M800.5 328 V339 M801.5 330 V339 M802.5 331 V339 M803.5 331 V339 M804.5 329 V339 M805.5 328 V339 M806.5 331 V339 M807.5 328 V339 M808.5 331 V339 M809.5 328 V339 M810.5 326 V339 M811.5 324 V339 M812.5 323 V339 M813.5 323 V339 M814.5 324 V339 M815.5 326 V339 M816.5 327 V339 M817.5 327 V339 M818.5 322 V339 M819.5 320 V339 M820.5 327 V339 M821.5 324 V339 M822.5 326 V339 M823.5 326 V339 M824.5 325 V339 M825.5 325 V339 M826.5 324 V339 M827.5 325 V339 M828.5 325 V339 M829.5 326 V339 M830.5 325 V339 M831.5 326 V339 M832.5 324 V339 M833.5 326 V339 M834.5 330 V339 M835.5 330 V339 M836.5 328 V339 M837.5 330 V339 M838.5 329 V339 M839.5 329 V339 M840.5 329 V339 M841.5 331 V339 M842.5 331 V339 M843.5 330 V339 M844.5 331 V339 M845.5 331 V339 M846.5 331 V339 M847.5 329 V339 M848.5 328 V339 M849.5 327 V339 M850.5 328 V339 M851.5 329 V339 M852.5 323 V339 M853.5 323 V339 M854.5 326 V339 M855.5 328 V339 M856.5 327 V339 M857.5 328 V339 M858.5 325 V339 M859.5 327 V339 M860.5 328 V339 M861.5 328 V339 M862.5 324 V339 M863.5 321 V339 M864.5 324 V339 M878.5 327 V339 M879.5 326 V339 M880.5 325 V339 M881.5 323 V339 M882.5 322 V339 M883.5 321 V339 M884.5 322 V339 M885.5 322 V339 M886.5 325 V339 M887.5 326 V339 M888.5 327 V339 M889.5 327 V339 M890.5 323 V339 M891.5 325 V339 M892.5 327 V339 M893.5 327 V339 M894.5 327 V339 M895.5 326 V339 M896.5 327 V339 M897.5 326 V339 M898.5 327 V339 M899.5 327 V339 M900.5 326 V339 M901.5 327 V339 M902.5 330 V339 M903.5 329 V339 M904.5 328 V339 M905.5 329 V339 M906.5 330 V339 M907.5 328 V339 M908.5 327 V339 M909.5 329 V339 M910.5 330 V339 M911.5 330 V339 M912.5 328 V339 M913.5 330 V339 M914.5 330 V339 M915.5 330 V339 M916.5 329 V339 M917.5 330 V339 M918.5 328 V339 M919.5 330 V339 M920.5 327 V339 M921.5 326 V339 M922.5 330 V339 M923.5 331 V339 M924.5 330 V339 M925.5 327 V339 M926.5 331 V339 M927.5 331 V339 M928.5 331 V339 M929.5 328 V339 M930.5 328 V339 M931.5 326 V339 M932.5 325 V339 M933.5 326 V339 M934.5 328 V339 M935.5 328 V339 M936.5 328 V339 M937.5 329 V339 M938.5 331 V339 M939.5 331 V339 M940.5 331 V339 M941.5 329 V339 M942.5 331 V339 M943.5 331 V339 M944.5 329 V339 M945.5 329 V339 M946.5 331 V339 M947.5 325 V339 M948.5 331 V339 M949.5 331 V339 M950.5 327 V339 M951.5 326 V339 M952.5 325 V339 M953.5 324 V339 M954.5 324 V339 M955.5 325 V339 M956.5 326 V339 M957.5 327 V339 M958.5 329 V339 M959.5 329 V339 M960.5 327 V339 M961.5 322 V339 M962.5 329 V339 M963.5 329 V339 M964.5 326 V339 M965.5 329 V339 M966.5 329 V339 M967.5 329 V339 M968.5 329 V339 M969.5 329 V339 M970.5 328 V339 M971.5 328 V339 M972.5 325 V339 M973.5 326 V339 M974.5 328 V339 M975.5 328 V339 M976.5 325 V339 M977.5 321 V339 M978.5 325 V339 M979.5 328 V339 M980.5 328 V339 M981.5 328 V339 M982.5 323 V339 M983.5 328 V339 M984.5 328 V339 M985.5 328 V339 M986.5 328 V339 M987.5 328 V339 M988.5 323 V339 M989.5 328 V339 M990.5 331 V339 M991.5 328 V339 M992.5 331 V339 M993.5 328 V339 M994.5 328 V339 M995.5 327 V339 M996.5 327 V339 M997.5 326 V339 M998.5 327 V339 M999.5 327 V339 M1000.5 328 V339 M1001.5 328 V339 M1002.5 330 V339 M1003.5 323 V339 M1004.5 330 V339 M1005.5 330 V339 M1006.5 328 V339 M1007.5 329 V339 M1008.5 329 V339 M1009.5 327 V339 M1010.5 328 V339 M1011.5 323 V339 M1012.5 328 V339 M1013.5 329 V339 M1014.5 328 V339 M1015.5 330 V339 " stroke="#00f000" stroke-width="1" fill="none"/><path d="M17.5 336 v1 M18.5 335 v2 M20.5 335 v1 M22.5 336 v2 M34.5 335 v2 M39.5 336 v2 M43.5 335 v2 M44.5 335 v2 M57.5 336 v2 M64.5 335 v1 M66.5 336 v2 M71.5 335 v2 M81.5 336 v1 M83.5 335 v1 M93.5 335 v2 M100.5 335 v1 M103.5 335 v1 M105.5 336 v2 M106.5 336 v2 M108.5 336 v2 M109.5 335 v1 M115.5 335 v2 M118.5 336 v1 M128.5 336 v2 M145.5 336 v2 M148.5 335 v1 M158.5 336 v2 M160.5 335 v2 M164.5 335 v2 M165.5 335 v2 M168.5 336 v1 M200.5 336 v2 M202.5 336 v2 M203.5 335 v2 M210.5 335 v1 M212.5 336 v2 M218.5 336 v1 M235.5 336 v1 M239.5 336 v2 M242.5 335 v1 M245.5 336 v2 M256.5 336 v1 M262.5 335 v2 M271.5 336 v1 M272.5 336 v1 M274.5 336 v1 M275.5 335 v2 M277.5 336 v2 M283.5 336 v2 M287.5 336 v1 M289.5 336 v2 M290.5 336 v2 M303.5 336 v2 M304.5 336 v2 M314.5 335 v1 M325.5 336 v1 M327.5 335 v2 M338.5 335 v2 M339.5 335 v2 M346.5 336 v2 M347.5 336 v2 M351.5 336 v2 M354.5 336 v2 M366.5 336 v2 M369.5 336 v1 M378.5 336 v1 M389.5 336 v2 M394.5 336 v2 M406.5 336 v2 M422.5 336 v1 M424.5 336 v2 M438.5 335 v2 M469.5 336 v2 M470.5 336 v2 M481.5 335 v2 M488.5 336 v2 M505.5 336 v2 M514.5 336 v2 M516.5 336 v2 M521.5 336 v1 M522.5 336 v1 M524.5 336 v1 M525.5 336 v2 M526.5 336 v2 M533.5 336 v2 M557.5 335 v1 M558.5 335 v2 M560.5 336 v2 M561.5 336 v2 M562.5 336 v1 M564.5 336 v1 M567.5 336 v2 M568.5 336 v2 M570.5 335 v2 M584.5 335 v2 M591.5 336 v2 M609.5 336 v2 M620.5 336 v2 M621.5 336 v2 M624.5 336 v1 M625.5 336 v1 M629.5 336 v1 M649.5 336 v2 M658.5 335 v2 M661.5 336 v2 M663.5 335 v2 M665.5 335 v2 M671.5 336 v2 M675.5 335 v1 M679.5 336 v1 M686.5 336 v2 M689.5 336 v2 M695.5 336 v2 M700.5 335 v2 M701.5 336 v1 M707.5 336 v1 M708.5 336 v2 M711.5 335 v1 M715.5 335 v2 M718.5 336 v2 M719.5 336 v2 M745.5 335 v2 M748.5 336 v2 M750.5 336 v2 M755.5 336 v2 M765.5 336 v2 M768.5 336 v2 M769.5 336 v2 M779.5 336 v2 M783.5 336 v1 M797.5 335 v2 M803.5 335 v2 M808.5 336 v2 M810.5 335 v1 M820.5 336 v1 M830.5 336 v2 M836.5 336 v1 M837.5 336 v1 M838.5 335 v2 M846.5 335 v2 M848.5 335 v1 M852.5 335 v2 M853.5 335 v1 M860.5 336 v1 M863.5 336 v2 M881.5 336 v2 M895.5 336 v2 M896.5 335 v2 M901.5 335 v1 M903.5 335 v2 M912.5 336 v1 M922.5 335 v1 M929.5 336 v2 M931.5 336 v2 M937.5 336 v1 M941.5 336 v2 M944.5 336 v1 M946.5 336 v2 M975.5 336 v1 M977.5 335 v2 M987.5 335 v1 M992.5 336 v2 M993.5 335 v2 M997.5 336 v2 M1011.5 336 v2 " stroke="#000" stroke-opacity="0.85" stroke-width="1" fill="none"/><path d="M25.5 337 v1 M27.5 337 v1 M38.5 337 v1 M42.5 337 v1 M52.5 337 v1 M60.5 337 v1 M74.5 337 v1 M80.5 337 v1 M94.5 337 v1 M121.5 337 v1 M146.5 337 v1 M152.5 337 v1 M196.5 337 v1 M201.5 337 v1 M204.5 337 v1 M211.5 337 v1 M264.5 337 v1 M292.5 337 v1 M298.5 337 v1 M301.5 337 v1 M352.5 337 v1 M363.5 337 v1 M365.5 337 v1 M370.5 337 v1 M371.5 337 v1 M383.5 337 v1 M388.5 337 v1 M397.5 337 v1 M423.5 337 v1 M448.5 337 v1 M459.5 337 v1 M472.5 337 v1 M486.5 337 v1 M509.5 337 v1 M512.5 337 v1 M528.5 337 v1 M547.5 337 v1 M551.5 337 v1 M552.5 337 v1 M572.5 337 v1 M588.5 337 v1 M592.5 337 v1 M604.5 337 v1 M605.5 337 v1 M616.5 337 v1 M677.5 337 v1 M680.5 337 v1 M683.5 337 v1 M710.5 337 v1 M716.5 337 v1 M790.5 337 v1 M817.5 337 v1 M825.5 337 v1 M826.5 337 v1 M840.5 337 v1 M851.5 337 v1 M854.5 337 v1 M861.5 337 v1 M862.5 337 v1 M879.5 337 v1 M883.5 337 v1 M892.5 337 v1 M898.5 337 v1 M921.5 337 v1 M933.5 337 v1 M949.5 337 v1 M963.5 337 v1 M965.5 337 v1 M983.5 337 v1 M985.5 337 v1 M990.5 337 v1 M991.5 337 v1 M995.5 337 v1 M1012.5 337 v1 " stroke="#0a600a" stroke-width="1" fill="none"/><path d="M17 338.5 H1016" stroke="#00ff00" stroke-width="1"/><path d="M17 339.5 H1016" stroke="#0b6a0b" stroke-width="1"/><path d="M17.5 340 v1 M19.5 340 v1 M20.5 340 v1 M22.5 340 v1 M31.5 340 v1 M35.5 340 v1 M37.5 340 v1 M39.5 340 v1 M43.5 340 v1 M49.5 340 v1 M55.5 340 v1 M57.5 340 v1 M60.5 340 v1 M63.5 340 v1 M69.5 340 v1 M75.5 340 v1 M76.5 340 v1 M77.5 340 v1 M78.5 340 v1 M80.5 340 v1 M82.5 340 v1 M85.5 340 v1 M86.5 340 v1 M90.5 340 v1 M91.5 340 v1 M96.5 340 v1 M99.5 340 v1 M100.5 340 v1 M101.5 340 v1 M102.5 340 v1 M103.5 340 v1 M105.5 340 v1 M106.5 340 v1 M113.5 340 v1 M116.5 340 v1 M118.5 340 v1 M120.5 340 v1 M121.5 340 v1 M123.5 340 v1 M125.5 340 v1 M127.5 340 v1 M128.5 340 v1 M131.5 340 v1 M132.5 340 v1 M135.5 340 v1 M136.5 340 v1 M137.5 340 v1 M138.5 340 v1 M139.5 340 v1 M140.5 340 v1 M141.5 340 v1 M148.5 340 v1 M150.5 340 v1 M151.5 340 v1 M153.5 340 v1 M154.5 340 v1 M155.5 340 v1 M156.5 340 v1 M157.5 340 v1 M160.5 340 v1 M161.5 340 v1 M162.5 340 v1 M167.5 340 v1 M169.5 340 v1 M170.5 340 v1 M173.5 340 v1 M192.5 340 v1 M195.5 340 v1 M199.5 340 v1 M200.5 340 v1 M202.5 340 v1 M205.5 340 v1 M206.5 340 v1 M207.5 340 v1 M208.5 340 v1 M212.5 340 v1 M213.5 340 v1 M214.5 340 v1 M215.5 340 v1 M218.5 340 v1 M220.5 340 v1 M221.5 340 v1 M222.5 340 v1 M227.5 340 v1 M231.5 340 v1 M232.5 340 v1 M234.5 340 v1 M235.5 340 v1 M237.5 340 v1 M238.5 340 v1 M242.5 340 v1 M243.5 340 v1 M244.5 340 v1 M245.5 340 v1 M247.5 340 v1 M248.5 340 v1 M250.5 340 v1 M253.5 340 v1 M254.5 340 v1 M260.5 340 v1 M261.5 340 v1 M267.5 340 v1 M268.5 340 v1 M275.5 340 v1 M283.5 340 v1 M287.5 340 v1 M288.5 340 v1 M293.5 340 v1 M302.5 340 v1 M315.5 340 v1 M318.5 340 v1 M320.5 340 v1 M321.5 340 v1 M324.5 340 v1 M329.5 340 v1 M330.5 340 v1 M336.5 340 v1 M337.5 340 v1 M338.5 340 v1 M344.5 340 v1 M345.5 340 v1 M360.5 340 v1 M362.5 340 v1 M367.5 340 v1 M371.5 340 v1 M373.5 340 v1 M375.5 340 v1 M377.5 340 v1 M378.5 340 v1 M382.5 340 v1 M385.5 340 v1 M386.5 340 v1 M387.5 340 v1 M389.5 340 v1 M390.5 340 v1 M392.5 340 v1 M393.5 340 v1 M394.5 340 v1 M395.5 340 v1 M396.5 340 v1 M397.5 340 v1 M398.5 340 v1 M399.5 340 v1 M402.5 340 v1 M404.5 340 v1 M424.5 340 v1 M426.5 340 v1 M427.5 340 v1 M430.5 340 v1 M434.5 340 v1 M438.5 340 v1 M441.5 340 v1 M442.5 340 v1 M446.5 340 v1 M447.5 340 v1 M451.5 340 v1 M452.5 340 v1 M453.5 340 v1 M458.5 340 v1 M459.5 340 v1 M461.5 340 v1 M463.5 340 v1 M466.5 340 v1 M467.5 340 v1 M469.5 340 v1 M474.5 340 v1 M477.5 340 v1 M480.5 340 v1 M481.5 340 v1 M482.5 340 v1 M485.5 340 v1 M487.5 340 v1 M490.5 340 v1 M493.5 340 v1 M494.5 340 v1 M499.5 340 v1 M500.5 340 v1 M501.5 340 v1 M503.5 340 v1 M506.5 340 v1 M507.5 340 v1 M508.5 340 v1 M515.5 340 v1 M517.5 340 v1 M519.5 340 v1 M521.5 340 v1 M522.5 340 v1 M523.5 340 v1 M525.5 340 v1 M528.5 340 v1 M530.5 340 v1 M531.5 340 v1 M533.5 340 v1 M536.5 340 v1 M537.5 340 v1 M541.5 340 v1 M542.5 340 v1 M543.5 340 v1 M546.5 340 v1 M549.5 340 v1 M552.5 340 v1 M558.5 340 v1 M562.5 340 v1 M563.5 340 v1 M567.5 340 v1 M569.5 340 v1 M570.5 340 v1 M571.5 340 v1 M573.5 340 v1 M577.5 340 v1 M581.5 340 v1 M587.5 340 v1 M591.5 340 v1 M593.5 340 v1 M601.5 340 v1 M602.5 340 v1 M603.5 340 v1 M604.5 340 v1 M605.5 340 v1 M607.5 340 v1 M608.5 340 v1 M610.5 340 v1 M611.5 340 v1 M612.5 340 v1 M617.5 340 v1 M619.5 340 v1 M620.5 340 v1 M624.5 340 v1 M628.5 340 v1 M629.5 340 v1 M633.5 340 v1 M635.5 340 v1 M655.5 340 v1 M658.5 340 v1 M659.5 340 v1 M663.5 340 v1 M665.5 340 v1 M666.5 340 v1 M672.5 340 v1 M675.5 340 v1 M678.5 340 v1 M679.5 340 v1 M682.5 340 v1 M685.5 340 v1 M689.5 340 v1 M690.5 340 v1 M692.5 340 v1 M693.5 340 v1 M694.5 340 v1 M696.5 340 v1 M697.5 340 v1 M701.5 340 v1 M705.5 340 v1 M706.5 340 v1 M711.5 340 v1 M716.5 340 v1 M717.5 340 v1 M718.5 340 v1 M719.5 340 v1 M720.5 340 v1 M725.5 340 v1 M726.5 340 v1 M732.5 340 v1 M739.5 340 v1 M740.5 340 v1 M743.5 340 v1 M744.5 340 v1 M752.5 340 v1 M758.5 340 v1 M762.5 340 v1 M764.5 340 v1 M766.5 340 v1 M770.5 340 v1 M772.5 340 v1 M775.5 340 v1 M777.5 340 v1 M781.5 340 v1 M784.5 340 v1 M785.5 340 v1 M786.5 340 v1 M788.5 340 v1 M798.5 340 v1 M799.5 340 v1 M800.5 340 v1 M804.5 340 v1 M805.5 340 v1 M806.5 340 v1 M812.5 340 v1 M814.5 340 v1 M819.5 340 v1 M827.5 340 v1 M829.5 340 v1 M831.5 340 v1 M832.5 340 v1 M834.5 340 v1 M835.5 340 v1 M836.5 340 v1 M839.5 340 v1 M843.5 340 v1 M844.5 340 v1 M845.5 340 v1 M850.5 340 v1 M852.5 340 v1 M854.5 340 v1 M857.5 340 v1 M861.5 340 v1 M881.5 340 v1 M885.5 340 v1 M887.5 340 v1 M889.5 340 v1 M892.5 340 v1 M893.5 340 v1 M897.5 340 v1 M898.5 340 v1 M901.5 340 v1 M904.5 340 v1 M906.5 340 v1 M911.5 340 v1 M913.5 340 v1 M914.5 340 v1 M918.5 340 v1 M922.5 340 v1 M924.5 340 v1 M926.5 340 v1 M928.5 340 v1 M931.5 340 v1 M932.5 340 v1 M934.5 340 v1 M935.5 340 v1 M938.5 340 v1 M940.5 340 v1 M941.5 340 v1 M942.5 340 v1 M951.5 340 v1 M952.5 340 v1 M954.5 340 v1 M958.5 340 v1 M959.5 340 v1 M962.5 340 v1 M963.5 340 v1 M964.5 340 v1 M969.5 340 v1 M972.5 340 v1 M974.5 340 v1 M975.5 340 v1 M977.5 340 v1 M978.5 340 v1 M984.5 340 v1 M986.5 340 v1 M988.5 340 v1 M989.5 340 v1 M992.5 340 v1 M993.5 340 v1 M994.5 340 v1 M995.5 340 v1 M996.5 340 v1 M997.5 340 v1 M1000.5 340 v1 M1005.5 340 v1 M1007.5 340 v1 M1012.5 340 v1 M1013.5 340 v1 " stroke="#0a5a0a" stroke-width="1" fill="none"/><path d="M28.5 340 v4 M48.5 340 v4 M64.5 340 v2 M68.5 340 v3 M71.5 340 v2 M83.5 340 v3 M87.5 340 v2 M88.5 340 v2 M97.5 340 v2 M98.5 340 v4 M104.5 340 v4 M111.5 340 v2 M119.5 340 v4 M130.5 340 v4 M159.5 340 v4 M163.5 340 v4 M164.5 340 v3 M166.5 340 v3 M196.5 340 v3 M203.5 340 v4 M204.5 340 v3 M211.5 340 v4 M226.5 340 v2 M233.5 340 v2 M241.5 340 v3 M263.5 340 v4 M295.5 340 v3 M322.5 340 v3 M326.5 340 v4 M343.5 340 v3 M355.5 340 v2 M357.5 340 v3 M364.5 340 v3 M380.5 340 v2 M422.5 340 v2 M425.5 340 v2 M432.5 340 v4 M448.5 340 v2 M460.5 340 v3 M462.5 340 v2 M465.5 340 v4 M498.5 340 v4 M511.5 340 v4 M524.5 340 v3 M526.5 340 v4 M544.5 340 v2 M553.5 340 v3 M586.5 340 v3 M588.5 340 v2 M590.5 340 v4 M595.5 340 v3 M596.5 340 v4 M597.5 340 v3 M600.5 340 v4 M609.5 340 v4 M622.5 340 v2 M623.5 340 v4 M627.5 340 v2 M654.5 340 v4 M657.5 340 v3 M669.5 340 v3 M674.5 340 v4 M686.5 340 v2 M702.5 340 v2 M709.5 340 v4 M721.5 340 v2 M723.5 340 v2 M734.5 340 v4 M735.5 340 v4 M742.5 340 v2 M782.5 340 v2 M783.5 340 v4 M797.5 340 v4 M807.5 340 v2 M816.5 340 v2 M817.5 340 v3 M823.5 340 v2 M828.5 340 v2 M833.5 340 v2 M842.5 340 v2 M847.5 340 v2 M862.5 340 v3 M883.5 340 v4 M890.5 340 v3 M907.5 340 v3 M909.5 340 v2 M920.5 340 v2 M927.5 340 v2 M936.5 340 v4 M944.5 340 v4 M945.5 340 v4 M957.5 340 v2 M970.5 340 v3 M971.5 340 v3 M983.5 340 v4 M985.5 340 v4 M1011.5 340 v3 " stroke="#00d000" stroke-width="1" fill="none"/><polygon points="176.00,339.20 176.00,311.08 178.40,288.59 179.80,275.23 180.40,270.31 181.00,268.20 182.97,268.20 183.73,271.71 184.59,280.85 186.75,296.32 188.91,313.19 190.64,324.44 192.37,331.47 193.88,335.69 194.96,339.20" fill="#00f000" shape-rendering="auto"/><polygon points="177.50,338.50 178.00,313.89 179.30,296.32 181.90,278.04 182.11,278.04 184.81,296.32 186.86,313.89 188.70,328.66 190.10,335.69 190.86,338.50" fill="#000" shape-rendering="auto"/><polygon points="406.00,339.26 406.00,308.67 408.40,284.19 409.80,269.65 410.40,264.30 411.00,262.00 413.08,262.00 413.92,265.82 414.88,275.77 417.28,292.60 419.68,310.96 421.60,323.20 423.52,330.85 425.20,335.44 426.40,339.26" fill="#00f000" shape-rendering="auto"/><polygon points="407.50,338.50 408.00,311.73 409.30,292.60 411.90,272.71 412.12,272.71 415.12,292.60 417.40,311.73 419.44,327.79 421.00,335.44 421.84,338.50" fill="#000" shape-rendering="auto"/><polygon points="634.60,339.23 634.60,310.19 637.00,286.95 638.40,273.16 639.00,268.08 639.60,265.90 641.50,265.90 642.20,269.53 643.00,278.97 645.00,294.94 647.00,312.36 648.60,323.98 650.20,331.24 651.60,335.60 652.60,339.23" fill="#00f000" shape-rendering="auto"/><polygon points="636.10,338.50 636.60,313.09 637.90,294.94 640.50,276.06 640.70,276.06 643.20,294.94 645.10,313.09 646.80,328.34 648.10,335.60 648.80,338.50" fill="#000" shape-rendering="auto"/><polygon points="863.70,339.20 863.70,311.00 866.10,288.44 867.50,275.05 868.10,270.12 868.70,268.00 870.60,268.00 871.30,271.52 872.10,280.69 874.10,296.20 876.10,313.12 877.70,324.40 879.30,331.45 880.70,335.68 881.70,339.20" fill="#00f000" shape-rendering="auto"/><polygon points="865.20,338.50 865.70,313.82 867.00,296.20 869.60,277.87 869.80,277.87 872.30,296.20 874.20,313.82 875.90,328.63 877.20,335.68 877.90,338.50" fill="#000" shape-rendering="auto"/><path d="M17 338.5 H1016" stroke="#00ff00" stroke-width="1"/><path d="M516.5 322 V338" stroke="#9c9274" stroke-opacity="0.55" stroke-width="1"/><polygon points="172.5,36 183.5,36 178,46" fill="#ffa800" shape-rendering="auto"/><polygon points="995.5,294 1004,289 1004,299" fill="#00f000" shape-rendering="auto"/><rect x="1003" y="293" width="16" height="2" fill="#10e010"/><rect x="18" y="348" width="6" height="3" fill="#00f000"/><polygon points="23,344.5 30.5,350 23,355" fill="#00f000" shape-rendering="auto"/><circle cx="10.5" cy="349.5" r="9.2" fill="#00ee00" stroke="#ffa000" stroke-width="2" shape-rendering="auto"/><text x="10.3" y="354" font-family="Liberation Sans" font-size="12" text-anchor="middle" fill="#000">4</text><circle cx="116.6" cy="255.7" r="6.1" fill="#ffa500" shape-rendering="auto"/><text x="116.6" y="259.7" font-family="Liberation Sans" font-size="11.5" text-anchor="middle" fill="#000" stroke="#000" stroke-width="0.3">b</text><circle cx="116.6" cy="329.8" r="6.1" fill="#ffa500" shape-rendering="auto"/><text x="116.6" y="333.8" font-family="Liberation Sans" font-size="11.5" text-anchor="middle" fill="#000" stroke="#000" stroke-width="0.3">a</text><text x="80" y="300" font-family="Liberation Sans" font-size="12.3" fill="#00e400" transform="translate(80 0) scale(0.86 1) translate(-80 0)" textLength="33">VOUT</text></svg>
<div style="position:absolute;left:16px;top:671px;width:1001px;height:97px;background:#000;"></div>
<div style="position:absolute;left:16px;top:671px;width:1001px;height:1px;background:#1a2040;"></div>
<div class="panel" style="left:21px;top:674px;width:281.5px;height:24px;"></div>
<div class="pill" style="left:30px;top:681.3px;width:32.5px;height:14px;"><div style="line-height:11px;">C4</div></div>
<div class="t w" style="left:67.5px;top:681px;">100mV/div</div>
<svg style="position:absolute;left:0;top:0" width="1024" height="768"><text x="181" y="687" font-family="Liberation Sans" font-weight="bold" font-size="7.5" fill="#e0e0e0" textLength="11" lengthAdjust="spacingAndGlyphs">DC</text><text x="181" y="692" font-family="Liberation Sans" font-weight="bold" font-size="4.6" fill="#d8d8d8" textLength="11.3" lengthAdjust="spacingAndGlyphs">REJ</text></svg>
<div class="t w" style="left:214.5px;top:679.5px;font-size:10px;">B</div>
<div class="t w" style="left:220px;top:684px;">W</div>
<div class="t w" style="left:230.5px;top:681px;">:1.0M</div>
<div class="panel" style="left:306px;top:674px;width:136px;height:70px;"></div>
<div class="pill" style="left:314px;top:682.4px;width:35.5px;height:14.3px;"><div style="line-height:11px;">V1</div></div>
<div class="t w" style="left:354.5px;top:684px;">17.04mV</div>
<div class="pill" style="left:314px;top:703.5px;width:35.5px;height:14.3px;"><div style="line-height:11px;">V2</div></div>
<div class="t w" style="left:354.5px;top:705px;">134.86mV</div>
<div class="pill" style="left:314px;top:724.6px;width:35.5px;height:14.3px;"><div style="line-height:11px;">&Delta;V</div></div>
<div class="t w" style="left:354.5px;top:726px;">117.82mV</div>
<div style="position:absolute;left:352px;top:680px;width:86px;height:64px;box-sizing:border-box;border:1.2px solid #cfcfcf;"></div>
<div style="position:absolute;left:352px;top:701px;width:86px;height:1.2px;background:#cfcfcf;"></div>
<div style="position:absolute;left:352px;top:722px;width:86px;height:1.2px;background:#cfcfcf;"></div>
<div class="panel" style="left:591px;top:674px;width:186.5px;height:24px;"></div>
<div style="position:absolute;left:597px;top:681px;width:16px;height:15px;box-sizing:border-box;border:1px solid #ffa000;background:#d0d0d8;"></div>
<div class="t" style="left:599px;top:682.5px;font-size:10.5px;font-weight:bold;color:#000;">A'</div>
<div class="pill" style="left:614.7px;top:681.5px;width:33px;height:13.5px;"><div style="line-height:10.5px;">C4</div></div>
<svg style="position:absolute;left:0;top:0" width="1024" height="768"><path d="M650.5 693.2 H655.5 L660.8 682.2 H664" stroke="#eee" stroke-width="1.6" fill="none"/></svg>
<div class="t w" style="left:667px;top:681px;">88.0mV</div>
<div class="panel" style="left:781.5px;top:674px;width:230.5px;height:92.5px;"></div>
<div class="t w" style="left:789.5px;top:681px;">10.0&micro;s/div&nbsp; 2.5GS/s</div>
<div class="t w" style="left:938.5px;top:681px;">400ps/pt</div>
<div class="t w" style="left:789px;top:702px;color:#f4f400;">Preview</div>
<div class="t w" style="left:789px;top:723px;">0 acqs</div>
<div class="t w" style="left:929px;top:723px;">RL:250k</div>
<div class="t w" style="left:789px;top:744px;">Auto</div>
<div style="position:absolute;left:993px;top:702px;width:3.5px;height:13px;border-radius:2px 2px 0 0;background:#f4f400;"></div>
<div style="position:absolute;left:991px;top:712px;width:7px;height:7px;border-radius:50%;background:#f4f400;"></div>
</body></html>
